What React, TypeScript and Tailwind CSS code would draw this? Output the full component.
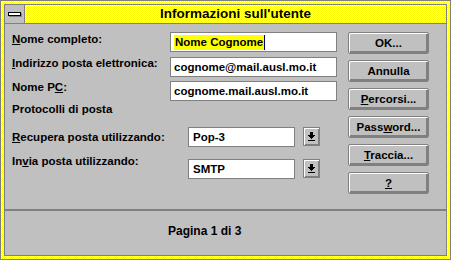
import React from "react";

const checker =
  "bg-[#ffff00] bg-[image:linear-gradient(45deg,#ffffff_37.5%,#ffff00_37.5%,#ffff00_62.5%,#ffffff_62.5%)] bg-[length:2px_2px]";

const btn =
  "flex h-[22px] w-[81px] items-center justify-center rounded-[2px] border border-[#808080] bg-[#c0c0c0] shadow-[inset_1px_1px_0_#ffffff,inset_-2px_-2px_0_#808080] text-black";

function U({ children }: { children: React.ReactNode }) {
  return <span className="underline underline-offset-[1px]">{children}</span>;
}

function Field({ children }: { children: React.ReactNode }) {
  return (
    <div className="flex h-[20px] w-[167px] items-center border border-[#808080] bg-white pl-[3px]">
      {children}
    </div>
  );
}

function DropArrow() {
  return (
    <svg width="7" height="9" viewBox="0 0 7 9" shapeRendering="crispEdges">
      <rect x="2" y="0" width="3" height="3" fill="#000" />
      <rect x="0" y="3" width="7" height="1" fill="#000" />
      <rect x="1" y="4" width="5" height="1" fill="#000" />
      <rect x="2" y="5" width="3" height="1" fill="#000" />
      <rect x="3" y="6" width="1" height="1" fill="#000" />
      <rect x="0" y="8" width="7" height="1" fill="#000" />
    </svg>
  );
}

function Combo({ value }: { value: string }) {
  return (
    <div className="flex items-start">
      <div className="flex h-[20px] w-[107px] items-center border border-[#808080] bg-white pl-[4px]">
        {value}
      </div>
      <div className="ml-[8px] flex h-[19px] w-[17px] items-center justify-center border border-[#808080] bg-[#c0c0c0] shadow-[inset_1px_1px_0_#ffffff,inset_-1px_-1px_0_#808080]">
        <DropArrow />
      </div>
    </div>
  );
}

export default function App() {
  return (
    <div
      className={`h-[260px] w-[451px] border border-[#808080] p-[3px] ${checker} font-bold text-black`}
      style={{ fontFamily: '"Liberation Sans", Arial, sans-serif' }}
    >
      <div className="flex h-full flex-col border border-[#808080] bg-[#c0c0c0]">
        {/* title bar */}
        <div className="flex h-[19px] border-b border-[#808080]">
          <div className="flex w-[20px] items-center justify-center border-r border-[#808080] bg-[#c0c0c0]">
            <div className="h-[4px] w-[13px] border border-black bg-white shadow-[1px_1px_0_#808080]" />
          </div>
          <div className={`flex flex-1 items-center justify-center ${checker} text-[13.5px] leading-[18px]`}>
            Informazioni sull'utente
          </div>
        </div>

        {/* client */}
        <div className="flex flex-1 flex-col text-[11.5px] leading-[13px]">
          <div className="flex pt-[8px]">
            <div className="w-[332px] pl-[7px]">
              <div className="flex h-[20px]">
                <div className="w-[158px] pt-[1px]">
                  <U>N</U>ome completo:
                </div>
                <Field>
                  <span className="bg-[#ffff00] px-[1px] leading-[15px]">Nome Cognome</span>
                  <span className="h-[15px] w-[1px] bg-[#000080]" />
                </Field>
              </div>
              <div className="mt-[5px] flex h-[20px]">
                <div className="w-[158px]">
                  <U>I</U>ndirizzo posta elettronica:
                </div>
                <Field>cognome@mail.ausl.mo.it</Field>
              </div>
              <div className="mt-[4px] flex h-[20px]">
                <div className="w-[158px]">
                  Nome P<U>C</U>:
                </div>
                <Field>cognome.mail.ausl.mo.it</Field>
              </div>
              <div className="mt-[2px]">Protocolli di posta</div>
              <div className="mt-[11px] flex h-[20px]">
                <div className="w-[176px] pt-[4px]">
                  <U>R</U>ecupera posta utilizzando:
                </div>
                <Combo value="Pop-3" />
              </div>
              <div className="mt-[8px] flex">
                <div className="w-[176px]">
                  In<U>v</U>ia posta utilizzando:
                </div>
                <div className="mt-[4px]">
                  <Combo value="SMTP" />
                </div>
              </div>
            </div>

            <div className="ml-[11px] flex flex-col gap-[6px]">
              <div className={btn}>OK...</div>
              <div className={btn}>Annulla</div>
              <div className={btn}>
                <span>
                  <U>P</U>ercorsi...
                </span>
              </div>
              <div className={btn}>
                <span>
                  Pass<U>w</U>ord...
                </span>
              </div>
              <div className={btn}>
                <span>
                  <U>T</U>raccia...
                </span>
              </div>
              <div className={btn}>
                <U>?</U>
              </div>
            </div>
          </div>

          <div className="mt-[15px] h-[2px] bg-[#808080]" />

          <div className="mt-[14px] pl-[163px] text-[12px]">Pagina 1 di 3</div>
        </div>
      </div>
    </div>
  );
}
